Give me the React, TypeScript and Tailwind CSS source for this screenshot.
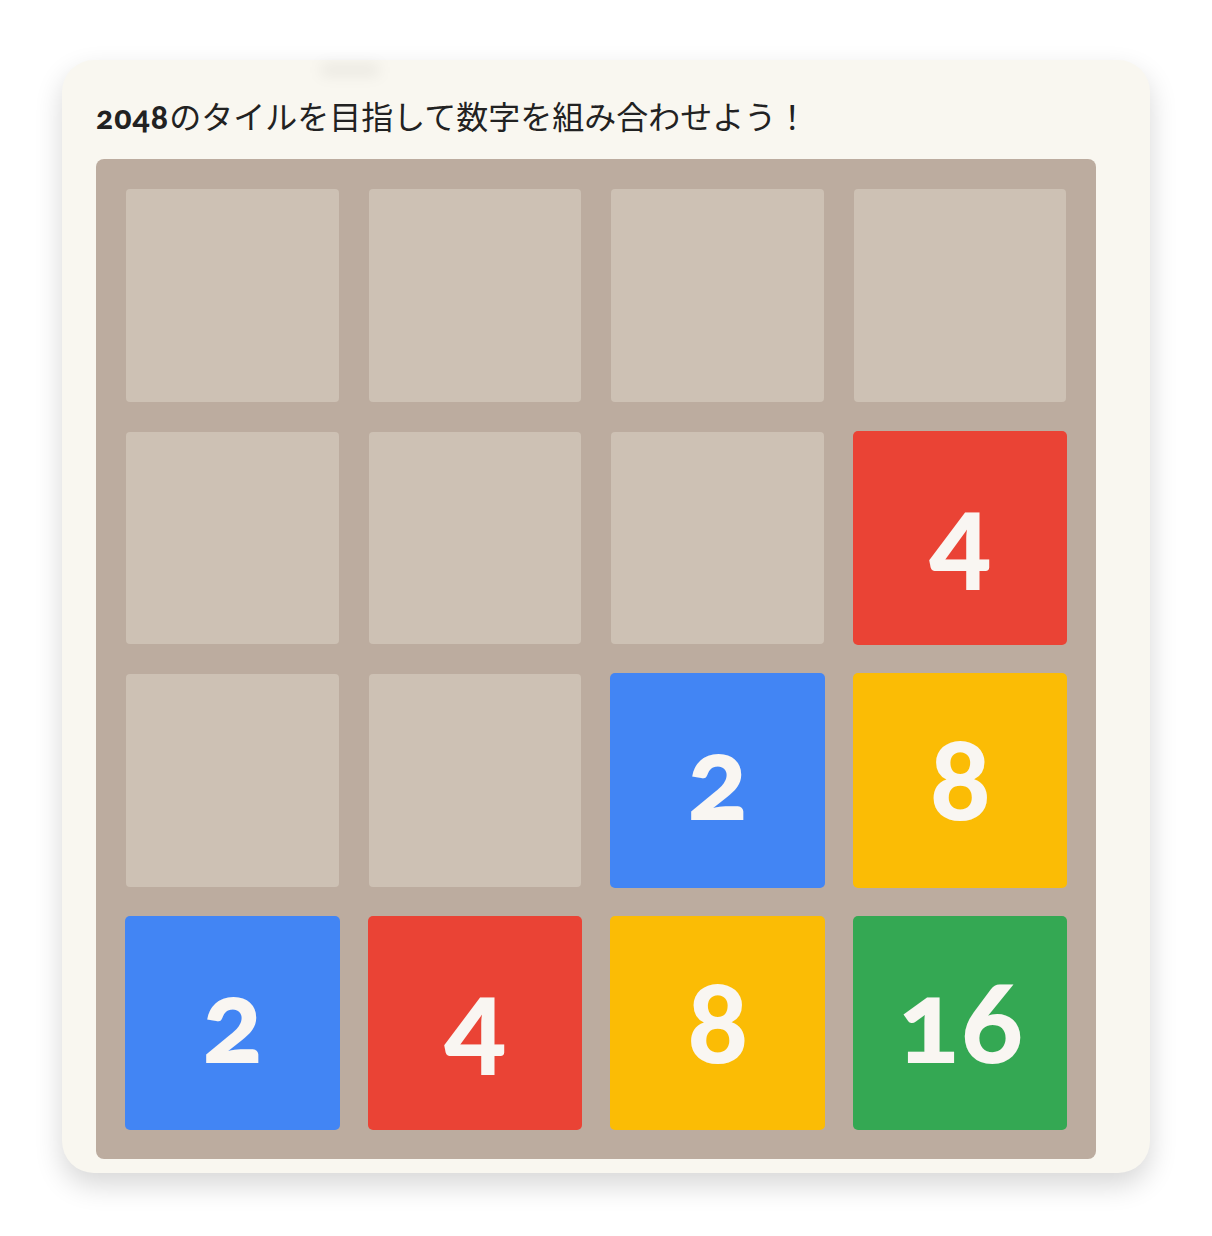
const board: number[][] = [
  [0, 0, 0, 0],
  [0, 0, 0, 4],
  [0, 0, 2, 8],
  [2, 4, 8, 16],
];

const tileColor: Record<number, string> = {
  2: "bg-[#4285f4]",
  4: "bg-[#ea4335]",
  8: "bg-[#fbbc05]",
  16: "bg-[#34a853]",
};

function Tile({ value }: { value: number }) {
  if (!value) return <div className="rounded-[4px] bg-[#cdc1b4]" />;
  return (
    <div
      className={`-m-[1px] flex items-center justify-center rounded-[5px] pb-[8px] pl-[3px] font-['Lato','Liberation_Sans',sans-serif] text-[114px] font-black leading-none tracking-[2px] text-[#f9f6f2] [font-variant-numeric:oldstyle-nums] ${tileColor[value]}`}
    >
      {value}
    </div>
  );
}

export default function App() {
  return (
    <div className="min-h-screen bg-white px-[62px] pt-[60px]">
      <div className="relative w-[1088px] rounded-[32px] bg-[#f9f7f0] pb-[14px] pl-[34px] pt-[34px] shadow-[0_12px_28px_rgba(0,0,0,0.16)]">
        <div className="absolute left-[258px] top-[4px] h-[12px] w-[60px] rounded-full bg-black/[0.06] blur-[7px]" />
        <p className="mb-[20px] font-['Lato','Noto_Sans_CJK_JP',sans-serif] text-[32px] leading-[45px] text-[#222]">
          <span className="font-black tracking-[1px] [font-variant-numeric:oldstyle-nums]">2048</span>
          のタイルを目指して数字を組み合わせよう！
        </p>
        <div className="grid h-[1000px] w-[1000px] grid-cols-4 grid-rows-4 gap-[30px] rounded-[8px] bg-[#bcac9f] p-[30px]">
          {board.flat().map((v, i) => (
            <Tile key={i} value={v} />
          ))}
        </div>
      </div>
    </div>
  );
}
